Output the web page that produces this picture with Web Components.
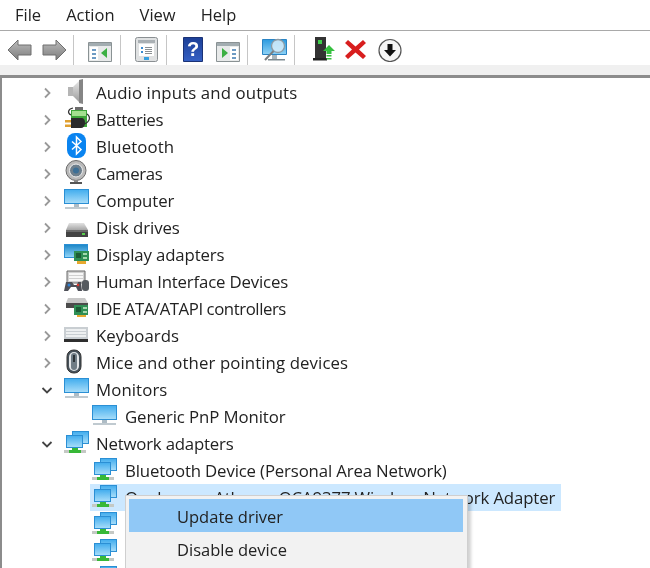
<!DOCTYPE html>
<html><head><meta charset="utf-8"><title>Device Manager</title>
<style>
html,body{margin:0;padding:0;background:#fff}
body{width:650px;height:568px;overflow:hidden;position:relative;font-family:"Open Sans","Noto Sans",sans-serif;color:#1a1a1a}
</style></head><body>
<dm-window>
  <dm-menubar><dm-menu-item>File</dm-menu-item><dm-menu-item>Action</dm-menu-item><dm-menu-item>View</dm-menu-item><dm-menu-item>Help</dm-menu-item></dm-menubar>
  <dm-toolbar>
    <dm-tool icon="back" ml="0"></dm-tool><dm-tool icon="forward" ml="10"></dm-tool><dm-sep ml="6"></dm-sep>
    <dm-tool icon="paneL" ml="14"></dm-tool><dm-sep ml="7"></dm-sep>
    <dm-tool icon="props" ml="14"></dm-tool><dm-sep ml="6"></dm-sep>
    <dm-tool icon="help" ml="16"></dm-tool><dm-tool icon="paneR" ml="12"></dm-tool><dm-sep ml="6"></dm-sep>
    <dm-tool icon="scan" ml="14"></dm-tool><dm-sep ml="7"></dm-sep>
    <dm-tool icon="update" ml="18"></dm-tool><dm-tool icon="remove" ml="7"></dm-tool><dm-tool icon="down" ml="8"></dm-tool>
  </dm-toolbar>
  <dm-tree>
    <dm-row icon="audio" ls=".12">Audio inputs and outputs</dm-row>
    <dm-row icon="battery" ls="-.33">Batteries</dm-row>
    <dm-row icon="bluetooth" ls=".1">Bluetooth</dm-row>
    <dm-row icon="camera" ls="-.4">Cameras</dm-row>
    <dm-row icon="monitor" ls="-.1">Computer</dm-row>
    <dm-row icon="disk" ls="-.1">Disk drives</dm-row>
    <dm-row icon="display" ls="-.13">Display adapters</dm-row>
    <dm-row icon="hid" ls="-.17">Human Interface Devices</dm-row>
    <dm-row icon="ide" ls="-.44">IDE ATA/ATAPI controllers</dm-row>
    <dm-row icon="keyboard">Keyboards</dm-row>
    <dm-row icon="mouse" ls=".1">Mice and other pointing devices</dm-row>
    <dm-row icon="monitor" open ls=".1">Monitors</dm-row>
    <dm-row icon="monitor" child ls="-.1">Generic PnP Monitor</dm-row>
    <dm-row icon="network" open ls="-.19">Network adapters</dm-row>
    <dm-row icon="network" child ls="-.15">Bluetooth Device (Personal Area Network)</dm-row>
    <dm-row icon="network" child selected ls="-.14">Qualcomm Atheros QCA9377 Wireless Network Adapter</dm-row>
    <dm-row icon="network" child></dm-row>
    <dm-row icon="network" child></dm-row>
    <dm-row icon="network" child></dm-row>
  </dm-tree>
  <dm-context-menu>
    <dm-context-item active>Update driver</dm-context-item>
    <dm-context-item>Disable device</dm-context-item>
  </dm-context-menu>
</dm-window>
<script>
const grad=(id,a,b)=>`<linearGradient id="${id}" x1="0" y1="0" x2="0" y2="1"><stop offset="0" stop-color="${a}"/><stop offset="1" stop-color="${b}"/></linearGradient>`;
const screen=(x,y,w,h,id)=>`<rect x="${x}" y="${y}" width="${w}" height="${h}" fill="#2b8fd4"/><rect x="${x+1}" y="${y+1}" width="${w-2}" height="${h-2}" fill="url(#${id})"/>`;
const TREE={
audio:`<defs>${grad('a','#e8e8e8','#9a9a9a')}</defs><path d="M4 8h5v9H4z" fill="#b5b5b5"/><path d="M9 8l7-7v23l-7-7z" fill="url(#a)"/><path d="M15 1l4-1v25l-4-1z" fill="#858585"/>`,
battery:`<path d="M7 4h16v17H7z" fill="#3fa53a"/><path d="M11 1h8v3h-8z" fill="#6d6d6d"/><path d="M8 5h14v5H8z" fill="#a4e08f"/><path d="M7 9C3 7 4 3 9 2M23 8c4 3 3 8-3 10" fill="none" stroke="#333" stroke-width="1.200"/><path d="M7 12h10c3 0 4 2 4 5s-2 5-4 5H7z" fill="#2a2a2a"/><path d="M1 14h6v2.500H1zM1 18.500h6V21H1z" fill="#e0a030"/>`,
bluetooth:`<rect x="3" y="0" width="19" height="25" rx="8" fill="#0a84f0"/><path d="M8 8.500l9 8-4.500 4.500V4l4.500 4.500-9 8" fill="none" stroke="#fff" stroke-width="1.500"/>`,
camera:`<circle cx="12" cy="10.500" r="10" fill="#b9b9b9" stroke="#6b6b6b"/><circle cx="12" cy="10.500" r="6.500" fill="#6e7f8c" stroke="#eee"/><circle cx="12" cy="10.500" r="3" fill="#3c6f96"/><path d="M10 20h4v2h-4z" fill="#888"/><path d="M6 22h12v2H6z" fill="#555"/>`,
monitor:`<defs>${grad('m','#45aeee','#a5dcf9')}</defs>${screen(0,2,25,15,'m')}<path d="M10 17h5v3h-5z" fill="#aebcc5"/><path d="M1 20h23v2H1z" fill="#c0cad0"/>`,
disk:`<defs>${grad('d','#e2e2e2','#a5a5a5')}</defs><path d="M5 9h15l4 7H2z" fill="url(#d)"/><path d="M2 16h22v7H2z" fill="#434343"/><path d="M2 16h22v2H2z" fill="#6a6a6a"/><path d="M18 19h3v2h-3z" fill="#58d04b"/>`,
display:`<defs>${grad('n','#1e88c8','#8fd3f7')}</defs>${screen(0,3,24,14,'n')}<path d="M10 10h15v10H10z" fill="#2f8f55"/><path d="M12 12h5v5h-5z" fill="#1c5c36"/><path d="M19 12h4v2h-4zM19 16h4v2h-4z" fill="#a4d8ae"/><path d="M13 20h9v3h-9z" fill="#e7a92f"/>`,
hid:`<path d="M3 3h18v12H3z" fill="#d0d0d0" stroke="#6a6a6a"/><path d="M5 5h14v2H5zM5 8h14v2H5zM5 11h14v2H5z" fill="#f7f7f7"/><path d="M0 23l2-9h6l2 3h3l1-3h3l1 9h-4l-2-4H7l-3 4z" fill="#4e5058"/><circle cx="5" cy="17" r="1.500" fill="#2e7fd1"/><circle cx="14" cy="17" r="1.300" fill="#d83a2e"/><rect x="18" y="12" width="7" height="11" rx="3" fill="#555a60"/>`,
ide:`<path d="M4 3h17l3 5H2z" fill="#c8c8c8"/><path d="M2 8h22v5H2z" fill="#4c4c4c"/><path d="M10 10h14v10H10z" fill="#2f8f55"/><path d="M12 12h5v5h-5z" fill="#1c5c36"/><path d="M19 12h4v2h-4zM19 16h4v2h-4z" fill="#a4d8ae"/><path d="M13 20h9v2h-9z" fill="#e7a92f"/>`,
keyboard:`<path d="M0 5h24v12H0z" fill="#c9ced2"/><path d="M2 7h20v2H2zM2 10h20v2H2zM2 13h20v2H2z" fill="#eef0f1"/><path d="M0 17h24v3H0z" fill="#2e2e2e"/>`,
mouse:`<rect x="3" y="1" width="14" height="23" rx="6.500" fill="#47525b" stroke="#333"/><rect x="5" y="3" width="10" height="19" rx="5" fill="#e3e6e8"/><rect x="7" y="4" width="6" height="17" rx="3" fill="#6f7c85"/><rect x="9" y="6" width="2" height="7" fill="#2c3338"/>`,
network:`<defs>${grad('w','#45aeee','#a5dcf9')}</defs>${screen(8,1,17,13,'w')}${screen(2,5,17,13,'w')}<path d="M0 20h22v3H0z" fill="#c5c9c5"/><path d="M8 18h6v2H8z" fill="#37b837"/><path d="M5 20h12v3H5z" fill="#37b837"/>`
};
const TB={
back:`<defs>${grad('g','#bcbcbc','#7d7d7d')}</defs><path d="M1 13L11 3v5h13v10H11v5z" fill="url(#g)" stroke="#6f6f6f"/>`,
forward:`<defs>${grad('g2','#bcbcbc','#7d7d7d')}</defs><path d="M24 13L14 3v5H1v10h13v5z" fill="url(#g2)" stroke="#6f6f6f"/>`,
paneL:`<path d="M.5 5.500h23v19H.5z" fill="#e8eaea" stroke="#8a9294"/><path d="M1 6h22v3H1z" fill="#a3adb1"/><path d="M2 10h8v13H2z" fill="#fff"/><path d="M4 12h4v2H4zM4 16h4v2H4zM4 20h4v2H4z" fill="#6d9bc4"/><path d="M19 11v10l-6-5z" fill="#3cb043"/>`,
props:`<rect x=".5" y=".5" width="22" height="24" rx="2" fill="#dfe1e2" stroke="#8a8f92"/><path d="M3 3h17v3H3z" fill="#aab0b4"/><path d="M4 7h15v12H4z" fill="#fff"/><path d="M6 10h2v2H6zM6 14h2v2H6z" fill="#3b8bd0"/><path d="M10 10h7v1h-7zM10 12h7v1h-7zM10 14h7v1h-7zM10 16h7v1h-7z" fill="#8a8f92"/><path d="M9 20h5v3H9z" fill="#36a0e0"/>`,
help:`<defs>${grad('h','#1c3f96','#3560c4')}</defs><path d="M.5.5h19v24H.5z" fill="url(#h)" stroke="#1a3276"/><text x="10" y="19" text-anchor="middle" font-family="Liberation Sans" font-weight="700" font-size="20" fill="#fff">?</text>`,
paneR:`<path d="M.5 5.500h23v19H.5z" fill="#e8eaea" stroke="#8a9294"/><path d="M1 6h22v3H1z" fill="#a3adb1"/><path d="M14 10h8v13h-8z" fill="#fff"/><path d="M16 12h4v2h-4zM16 16h4v2h-4zM16 20h4v2h-4z" fill="#6d9bc4"/><path d="M6 11v10l6-5z" fill="#3cb043"/>`,
scan:`<defs>${grad('s','#2c9be0','#8fd2f5')}</defs><path d="M.5 2.500h24v15H.5z" fill="url(#s)" stroke="#2a84c4"/><path d="M10 18h5v4h-5z" fill="#a9b4ba"/><path d="M6 22h17v1.500H6z" fill="#7d8a90"/><circle cx="16" cy="9" r="6.500" fill="#d7eefb" fill-opacity=".85" stroke="#8d9aa3" stroke-width="1.300"/><path d="M11.500 14L3 23" stroke="#7a7f83" stroke-width="2"/>`,
update:`<path d="M2 0h11v21H2z" fill="#333"/><path d="M5 3h4v4H5z" fill="#3fd04a"/><path d="M0 21h14v2.500H0z" fill="#222"/><path d="M16 8l6 6h-3.500v3h-5v-3H10z" fill="#35c03f"/><path d="M13.500 18h5v1.500h-5zM13.500 21h5v1.500h-5z" fill="#35c03f"/>`,
remove:`<path d="M3 3l7.500 6.500L18 3l3 3-7 6.500 7 6.500-3 3-7.500-6.500L3 22l-3-3 7-6.500L0 6z" fill="#d81e1e"/>`,
down:`<circle cx="12" cy="13.500" r="11" fill="#f6f6f6" stroke="#555" stroke-width="1.200"/><path d="M9.500 7h5v6H18l-6 6.500L6 13h3.500z" fill="#111"/>`
};
class Base extends HTMLElement{
  constructor(){super();this.attachShadow({mode:'open'});this.shadowRoot.innerHTML=this.constructor.html}
}
const def=(n,h)=>customElements.define(n,class extends Base{static html=h});
def('dm-window',`<style>:host{display:block;position:relative;width:650px;height:568px;overflow:hidden;filter:blur(.3px)}</style><slot></slot>`);
def('dm-menubar',`<style>:host{display:flex;height:28px;padding:0 0 2px 15px;gap:25px;align-items:center;background:#fff;border-bottom:1px solid #a9a9a9;box-sizing:content-box}</style><slot></slot>`);
def('dm-menu-item',`<style>:host{display:block;font:16.500px "Open Sans",sans-serif;color:#222}</style><slot></slot>`);
def('dm-toolbar',`<style>:host{display:flex;align-items:center;height:31px;padding:3px 0 0 7px;background:#fff;box-sizing:content-box;border-bottom:10px solid #f0f0f0}</style><slot></slot>`);
customElements.define('dm-sep',class extends HTMLElement{
  connectedCallback(){this.attachShadow({mode:'open'}).innerHTML=`<style>:host{display:block;width:1px;height:30px;background:#c6c6c6;margin-left:${this.getAttribute('ml')}px}</style>`}
});
customElements.define('dm-tool',class extends HTMLElement{
  connectedCallback(){const i=this.getAttribute('icon');const w=i=='help'?21:25;
    this.attachShadow({mode:'open'}).innerHTML=`<style>:host{display:block;margin-left:${this.getAttribute('ml')}px}svg{display:block}</style><svg width="${w}" height="25" viewBox="0 0 ${w} 25">${TB[i]}</svg>`}
});
def('dm-tree',`<style>:host{display:block;height:493px;box-sizing:border-box;border-top:3px solid #8c8c8c;border-left:2px solid #8c8c8c;padding-top:1px;background:#fff;overflow:hidden}</style><slot></slot>`);
customElements.define('dm-row',class extends HTMLElement{
  connectedCallback(){const o=this.hasAttribute('open'),c=this.hasAttribute('child'),s=this.hasAttribute('selected');
   const ch=c?'':o?`<svg width="12" height="12" viewBox="0 0 12 12"><path d="M1.500 4L6 8.500 10.500 4" fill="none" stroke="#444" stroke-width="1.800"/></svg>`:`<svg width="12" height="12" viewBox="0 0 12 12"><path d="M4 1.500L8.500 6 4 10.500" fill="none" stroke="#999" stroke-width="1.800"/></svg>`;
   const id=Math.random().toString(36).slice(2);
   const ic=TREE[this.getAttribute('icon')].replace(/id="(\w+)"/g,`id="$1${id}"`).replace(/url\(#(\w+)\)/g,`url(#$1${id})`);
   this.attachShadow({mode:'open'}).innerHTML=`<style>
   :host{display:flex;height:27px;align-items:center;box-sizing:border-box;font:16.800px/27px "Open Sans",sans-serif;color:#222;white-space:nowrap;letter-spacing:${this.getAttribute('ls')||0}px;padding-left:${c?88:39}px}
   .c{width:12px;height:12px;margin-right:11px;${c?'display:none':''}}
   .sel{display:flex;align-items:center;height:27px;padding:0 6px 0 ${c?2:0}px;${s?'background:#cce8ff;':''}}
   .i{width:27px;height:27px;margin-right:${c?6:5}px;flex:none}
   svg{display:block}
   </style><span class="c">${ch}</span><span class="sel"><span class="i"><svg width="27" height="27" viewBox="0 0 27 27">${ic}</svg></span><slot></slot></span>`}
});
def('dm-context-menu',`<style>:host{position:absolute;left:125px;top:495px;width:343px;height:100px;box-sizing:border-box;background:#f2f2f2;border:1px solid #cfcfcf;box-shadow:3px 3px 3px rgba(0,0,0,.18);padding:3px 4px 0 3px;display:block}</style><slot></slot>`);
customElements.define('dm-context-item',class extends HTMLElement{
  connectedCallback(){const a=this.hasAttribute('active');this.attachShadow({mode:'open'}).innerHTML=`<style>:host{display:block;height:33px;padding-left:48px;font:16.500px/35px "Open Sans",sans-serif;color:#222;${a?'background:#90c8f6;':''}}</style><slot></slot>`}
});
</script>
</body></html>
